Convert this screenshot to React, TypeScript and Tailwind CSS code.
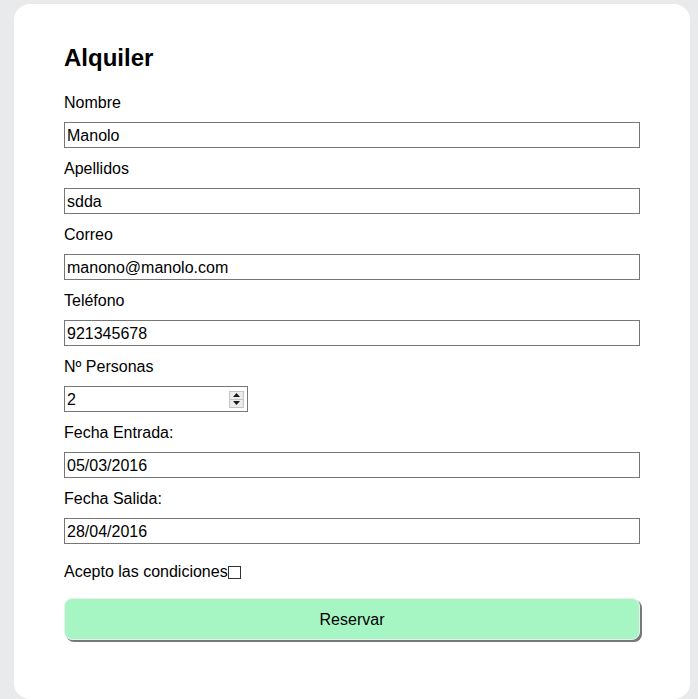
import { useState } from "react";

const campos = [
    { id: "nombre", label: "Nombre", value: "Manolo" },
    { id: "apellidos", label: "Apellidos", value: "sdda" },
    { id: "correo", label: "Correo", value: "manono@manolo.com" },
    { id: "telefono", label: "Teléfono", value: "921345678" },
];

const fechas = [
    { id: "entrada", label: "Fecha Entrada:", value: "05/03/2016" },
    { id: "salida", label: "Fecha Salida:", value: "28/04/2016" },
];

export default function App() {
    const [personas, setPersonas] = useState("2");
    const [acepto, setAcepto] = useState(false);

    const labelClass = "block text-[16px] leading-[18px] pt-[1px] mb-[10px]";
    const inputClass =
        "block w-full h-[26px] border border-[#767676] bg-white px-[2px] pt-[2px] text-[16px] leading-[20px] text-black focus:outline-none";

    return (
        <div className="min-h-[699px] bg-[#e9eaec] pt-[4px] pl-[14px] pr-[8px] font-['Liberation_Sans',Arial,sans-serif] text-black">
            <form
                className="bg-white rounded-[16px] h-[695px] px-[50px] pt-[40px]"
                onSubmit={(e) => e.preventDefault()}
            >
                <h2 className="text-[24px] leading-[28px] font-bold mb-[21px]">Alquiler</h2>

                {campos.map((c) => (
                    <div key={c.id} className="mb-[11px]">
                        <label htmlFor={c.id} className={labelClass}>
                            {c.label}
                        </label>
                        <input id={c.id} type="text" defaultValue={c.value} className={inputClass} />
                    </div>
                ))}

                <div className="mb-[11px]">
                    <label htmlFor="personas" className={labelClass}>
                        Nº Personas
                    </label>
                    <div className="flex items-center w-[184px] h-[26px] border border-[#767676] pl-[2px] pr-[3px]">
                        <input
                            id="personas"
                            type="text"
                            inputMode="numeric"
                            value={personas}
                            onChange={(e) => setPersonas(e.target.value.replace(/\D/g, ""))}
                            className="flex-1 min-w-0 pt-[2px] text-[16px] leading-[20px] focus:outline-none"
                        />
                        <div className="flex flex-col w-[15px] h-[17px] border border-[#c4c4c4] bg-[#ececec]">
                            <button
                                type="button"
                                onClick={() => setPersonas(String(Number(personas || 0) + 1))}
                                className="flex-1 flex items-center justify-center border-b border-[#c4c4c4]"
                            >
                                <svg width="7" height="4" viewBox="0 0 7 4">
                                    <path d="M0 4 L3.5 0 L7 4 Z" fill="#1a1a1a" />
                                </svg>
                            </button>
                            <button
                                type="button"
                                onClick={() => setPersonas(String(Math.max(0, Number(personas || 0) - 1)))}
                                className="flex-1 flex items-center justify-center"
                            >
                                <svg width="7" height="4" viewBox="0 0 7 4">
                                    <path d="M0 0 L7 0 L3.5 4 Z" fill="#1a1a1a" />
                                </svg>
                            </button>
                        </div>
                    </div>
                </div>

                {fechas.map((f) => (
                    <div key={f.id} className="mb-[11px]">
                        <label htmlFor={f.id} className={labelClass}>
                            {f.label}
                        </label>
                        <input id={f.id} type="text" defaultValue={f.value} className={inputClass} />
                    </div>
                ))}

                <label className="flex items-center text-[16px] leading-[18px] mt-[19px] mb-[17px]">
                    Acepto las condiciones
                    <input
                        type="checkbox"
                        checked={acepto}
                        onChange={(e) => setAcepto(e.target.checked)}
                        className="appearance-none w-[13px] h-[13px] border border-[#333] bg-white checked:bg-[#333]"
                    />
                </label>

                <button
                    type="submit"
                    className="block w-full h-[42px] pt-[2px] rounded-[8px] bg-[#a6f6c4] text-[16px] text-black shadow-[2px_2px_0_#777] border border-[#eee]"
                >
                    Reservar
                </button>
            </form>
        </div>
    );
}
